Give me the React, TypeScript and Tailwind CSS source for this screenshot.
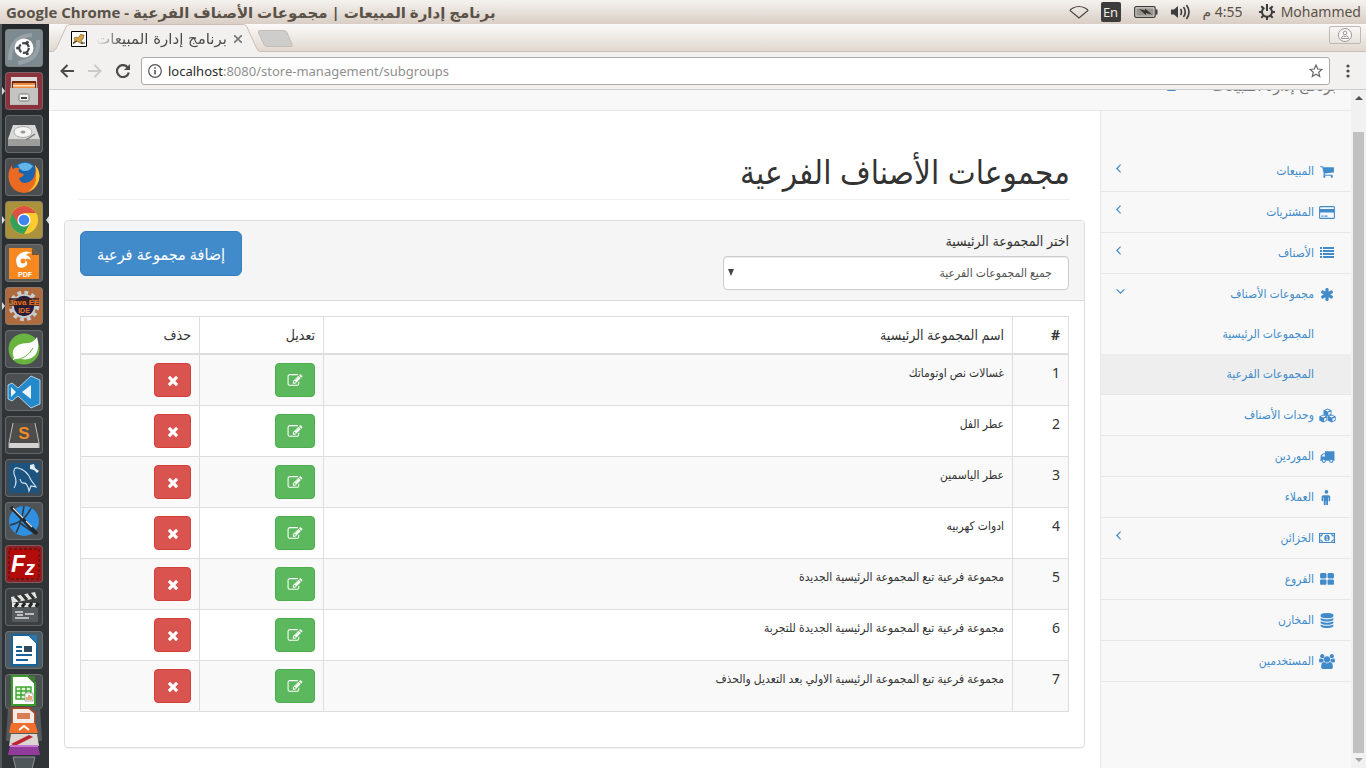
import React, { type ReactNode } from "react";

type IconProps = { className?: string };

const PATHS = {
  cart: "M704 1536q0 52-38 90t-90 38-90-38-38-90 38-90 90-38 90 38 38 90zm896 0q0 52-38 90t-90 38-90-38-38-90 38-90 90-38 90 38 38 90zm128-1088v512q0 24-16.5 42.5t-40.5 21.5l-1044 122q13 60 13 70 0 16-24 64h920q26 0 45 19t19 45-19 45-45 19h-1024q-26 0-45-19t-19-45q0-11 8-31.5t16-36 21.5-40 15.5-29.5l-177-823h-204q-26 0-45-19t-19-45 19-45 45-19h256q16 0 28.5 6.5t19.5 15.5 13 24.5 8 26 5.5 29.5 4.5 26h1201q26 0 45 19t19 45z",
  asterisk: "M1546 1050q46 26 59.5 77.5t-12.5 97.5l-64 110q-26 46-77.5 59.5t-97.5-12.5l-266-153v307q0 52-38 90t-90 38h-128q-52 0-90-38t-38-90v-307l-266 153q-46 26-97.5 12.5t-77.5-59.5l-64-110q-26-46-12.5-97.5t59.5-77.5l266-154-266-154q-46-26-59.5-77.5t12.5-97.5l64-110q26-46 77.5-59.5t97.5 12.5l266 153v-307q0-52 38-90t90-38h128q52 0 90 38t38 90v307l266-153q46-26 97.500-12.500t77.500 59.500l64 110q26 46 12.500 97.500t-59.500 77.500l-266 154z",
  truck: "M640 1408q0-52-38-90t-90-38-90 38-38 90 38 90 90 38 90-38 38-90zm-384-512h384v-256h-158q-13 0-22 9l-195 195q-9 9-9 22v30zm1280 512q0-52-38-90t-90-38-90 38-38 90 38 90 90 38 90-38 38-90zm256-1088v1024q0 15-4 26.5t-13.5 18.5-16.5 11.5-23.5 6-22.5 2-25.5 0-22.5-.5q0 106-75 181t-181 75-181-75-75-181h-384q0 106-75 181t-181 75-181-75-75-181h-64q-3 0-22.5.5t-25.5 0-22.5-2-23.5-6-16.5-11.5-13.5-18.5-4-26.5q0-26 19-45t45-19v-320q0-8-.5-35t0-38 2.5-34.5 6.5-37 14-30.5 22.5-30l198-198q19-19 50.5-32t58.5-13h160v-192q0-26 19-45t45-19h1024q26 0 45 19t19 45z",
  male: "M1280 832v416q0 40-28 68t-68 28-68-28-28-68v-352h-64v912q0 46-33 79t-79 33-79-33-33-79v-464h-64v464q0 46-33 79t-79 33-79-33-33-79v-912h-64v352q0 40-28 68t-68 28-68-28-28-68v-416q0-80 56-136t136-56h640q80 0 136 56t56 136zm-226-612a224 224 0 1 1-448 0 224 224 0 1 1 448 0z",
  large: "M832 1024v384q0 52-38 90t-90 38h-512q-52 0-90-38t-38-90v-384q0-52 38-90t90-38h512q52 0 90 38t38 90zm0-768v384q0 52-38 90t-90 38h-512q-52 0-90-38t-38-90v-384q0-52 38-90t90-38h512q52 0 90 38t38 90zm896 768v384q0 52-38 90t-90 38h-512q-52 0-90-38t-38-90v-384q0-52 38-90t90-38h512q52 0 90 38t38 90zm0-768v384q0 52-38 90t-90 38h-512q-52 0-90-38t-38-90v-384q0-52 38-90t90-38h512q52 0 90 38t38 90z",
  database: "M896 768q237 0 443-43t325-127v170q0 69-103 128t-280 93.5-385 34.5-385-34.5-280-93.5-103-128v-170q119 84 325 127t443 43zm0 768q237 0 443-43t325-127v170q0 69-103 128t-280 93.5-385 34.5-385-34.5-280-93.5-103-128v-170q119 84 325 127t443 43zm0-384q237 0 443-43t325-127v170q0 69-103 128t-280 93.5-385 34.5-385-34.5-280-93.5-103-128v-170q119 84 325 127t443 43zm0-1152q208 0 385 34.5t280 93.5 103 128v128q0 69-103 128t-280 93.5-385 34.5-385-34.5-280-93.5-103-128v-128q0-69 103-128t280-93.5 385-34.5z",
  users: "M529 896q-162 5-265 128h-134q-82 0-138-40.5t-56-118.5q0-353 124-353 6 0 43.5 21t97.5 42.5 119 21.5q67 0 133-23-5 37-5 66 0 139 81 256zm1071 637q0 120-73 189.5t-194 69.5h-874q-121 0-194-69.5t-73-189.5q0-53 3.5-103.5t14-109 26.5-108.5 43-97.5 62-81 85.5-53.5 111.5-20q10 0 43 21.5t73 48 107 48 135 21.5 135-21.5 107-48 73-48 43-21.5q61 0 111.5 20t85.5 53.5 62 81 43 97.5 26.5 108.5 14 109 3.5 103.5zm-1024-1277q0 106-75 181t-181 75-181-75-75-181 75-181 181-75 181 75 75 181zm704 384q0 159-112.5 271.5t-271.5 112.5-271.5-112.5-112.5-271.5 112.5-271.5 271.5-112.5 271.5 112.5 112.5 271.5zm576 225q0 78-56 118.5t-138 40.5h-134q-103-123-265-128 81-117 81-256 0-29-5-66 66 23 133 23 59 0 119-21.5t97.5-42.5 43.5-21q124 0 124 353zm-128-609q0 106-75 181t-181 75-181-75-75-181 75-181 181-75 181 75 75 181z",
  times: "M1490 1322q0 40-28 68l-136 136q-28 28-68 28t-68-28l-294-294-294 294q-28 28-68 28t-68-28l-136-136q-28-28-28-68t28-68l294-294-294-294q-28-28-28-68t28-68l136-136q28-28 68-28t68 28l294 294 294-294q28-28 68-28t68 28l136 136q28 28 28 68t-28 68l-294 294 294 294q28 28 28 68z",
  edit: "M888 1184l116-116-152-152-116 116v56h96v96h56zm440-720q-16-16-33 1l-350 350q-17 17-1 33t33-1l350-350q17-17 1-33zm80 594v190q0 119-84.5 203.5t-203.5 84.5h-832q-119 0-203.5-84.5t-84.5-203.5v-832q0-119 84.5-203.5t203.5-84.5h832q63 0 117 25 15 7 18 23 3 17-9 29l-49 49q-14 14-32 8-23-6-45-6h-832q-66 0-113 47t-47 113v832q0 66 47 113t113 47h832q66 0 113-47t47-113v-126q0-13 9-22l64-64q15-15 35-7t20 29zm-96-738l288 288-672 672h-288v-288zm444 132l-92 92-288-288 92-92q28-28 68-28t68 28l152 152q28 28 28 68t-28 68z",
};

function Glyph({ name, className }: IconProps & { name: keyof typeof PATHS }) {
  return (
    <svg aria-hidden="true" viewBox="-64 0 1920 1792" fill="currentColor" className={className}>
      <path d={PATHS[name]} />
    </svg>
  );
}

function Angle({ dir }: { dir: "left" | "down" }) {
  return dir === "left" ? (
    <svg aria-hidden="true" viewBox="0 0 5 9" className="mb-[6px] h-[9px] w-[5px]" fill="none" stroke="currentColor" strokeWidth="1.200">
      <path d="M4.600.6.800 4.500l3.800 3.900" />
    </svg>
  ) : (
    <svg aria-hidden="true" viewBox="0 0 9 5" className="mb-[6px] h-[5px] w-[9px]" fill="none" stroke="currentColor" strokeWidth="1.200">
      <path d="M.6.400 4.500 4.200 8.400.400" />
    </svg>
  );
}

function Card({ className }: IconProps) {
  return (
    <svg aria-hidden="true" viewBox="0 0 16 13" className={className}>
      <rect x=".6" y=".6" width="14.800" height="11.800" rx="1" fill="none" stroke="currentColor" strokeWidth="1.100" />
      <path d="M1 3h14v3.500H1zM2.500 9.600h2v1.100h-2zM5.500 9.600h3v1.100h-3z" fill="currentColor" />
    </svg>
  );
}

function List({ className }: IconProps) {
  return (
    <svg aria-hidden="true" viewBox="0 0 14 12" className={className} fill="currentColor">
      <path d="M0 0h2v2H0zM3 0h11v2H3zM0 3h2v2H0zM3 3h11v2H3zM0 6h2v2H0zM3 6h11v2H3zM0 9h2v2H0zM3 9h11v2H3z" />
    </svg>
  );
}

function Money({ className }: IconProps) {
  return (
    <svg aria-hidden="true" viewBox="0 0 16 14" className={className} fill="none" stroke="currentColor">
      <path d="M.6 2.500h14.800v9H.6z" strokeWidth="1.200" />
      <path d="M1 5Q3.200 5 3.200 3M15 5Q12.800 5 12.800 3M1 9q2.200 0 2.200 2M15 9q-2.200 0-2.200 2" strokeWidth="1.100" />
      <ellipse cx="8" cy="7" rx="2.700" ry="3.300" fill="currentColor" stroke="none" />
      <path d="M7.200 6l.9-.7V9M7 9h2.200" stroke="#f8f8f8" strokeWidth=".8" />
    </svg>
  );
}

function Cubes({ className }: IconProps) {
  const cube = (x: number, y: number) => (
    <g transform={`translate(${x} ${y})`}>
      <path d="M0 2.200 4 .4l4 1.800v4.200L4 8.400 0 6.400z" fill="currentColor" />
      <path d="M1.600 2.400 4 1.400l2.400 1L4 3.400zM4.700 4.600l2.400-1.100V5.900L4.700 7.100z" fill="#f8f8f8" />
    </g>
  );
  return (
    <svg aria-hidden="true" viewBox="0 0 17 15" className={className}>
      {cube(4.5, 0)}
      {cube(0.3, 6.2)}
      {cube(8.7, 6.2)}
    </svg>
  );
}

type NavItem = { label: string; icon: ReactNode; arrow?: "left" | "down"; children?: { label: string; active?: boolean }[] };

const g = (name: keyof typeof PATHS) => <Glyph name={name} className="h-[15px] w-4" />;

const NAV: NavItem[] = [
  { label: "المبيعات", icon: g("cart"), arrow: "left" },
  { label: "المشتريات", icon: <Card className="h-[13px] w-4" />, arrow: "left" },
  { label: "الأصناف", icon: <List className="h-3 w-[14px]" />, arrow: "left" },
  {
    label: "مجموعات الأصناف",
    icon: g("asterisk"),
    arrow: "down",
    children: [{ label: "المجموعات الرئيسية" }, { label: "المجموعات الفرعية", active: true }],
  },
  { label: "وحدات الأصناف", icon: <Cubes className="h-[15px] w-[17px]" /> },
  { label: "الموردين", icon: g("truck") },
  { label: "العملاء", icon: g("male") },
  { label: "الخزائن", icon: <Money className="h-[14px] w-4" />, arrow: "left" },
  { label: "الفروع", icon: g("large") },
  { label: "المخازن", icon: g("database") },
  { label: "المستخدمين", icon: g("users") },
];

const ROWS = [
  "غسالات نص اوتوماتك",
  "عطر الفل",
  "عطر الياسمين",
  "ادوات كهربيه",
  "مجموعة فرعية تبع المجموعة الرئيسية الجديدة",
  "مجموعة فرعية تبع المجموعة الرئيسية الجديدة للتجربة",
  "مجموعة فرعية تبع المجموعة الرئيسية الاولي بعد التعديل والحذف",
];

/* ---------- desktop ---------- */

function TopPanel() {
  return (
    <header className="flex h-6 shrink-0 items-center justify-between bg-gradient-to-b from-[#f5f2ee] to-[#d9cec5] pr-[5px] pl-[6px] text-[#5a5148]">
      <h1 dir="rtl" className="font-['Open_Sans','DejaVu_Sans',sans-serif] text-[15px] leading-6 font-bold whitespace-nowrap">
        برنامج إدارة المبيعات | مجموعات الأصناف الفرعية - Google Chrome
      </h1>
      <div className="flex items-center font-['Noto_Sans','DejaVu_Sans',sans-serif] text-[14px] leading-6 whitespace-nowrap">
        <svg aria-hidden="true" viewBox="0 0 20 14" className="mr-[12px] h-[14px] w-5" fill="none" stroke="#4c4640" strokeWidth="1.200">
          <path d="M1 5.500Q1 4.500 4 3q6-3 12 0 3 1.500 3 2.500L10 13z" />
        </svg>
        <span className="mr-[13px] flex h-5 w-5 items-center justify-center rounded-[2px] bg-[#3c3c3c] text-[13px] text-[#f0ebe6]">En</span>
        <svg aria-hidden="true" viewBox="0 0 24 12" className="mr-[12px] h-3 w-6">
          <rect x=".7" y=".7" width="20.500" height="10.600" rx="1.500" fill="none" stroke="#3c3c3c" strokeWidth="1.300" />
          <path d="M22 3.500h1.500v5H22z" fill="#3c3c3c" />
          <rect x="2.300" y="2.300" width="17.300" height="7.400" fill="#9a948e" />
          <path d="M5 3l6 1.500V2.500L18 8.500l-6-1.500v2z" fill="#333" />
        </svg>
        <svg aria-hidden="true" viewBox="0 0 21 16" className="mr-[12px] h-4 w-[21px]" fill="none" stroke="#3c3c3c" strokeWidth="1.600">
          <path d="M1 5.500h3L8 2v12L4 10.500H1z" fill="#3c3c3c" stroke="none" />
          <path d="M10.500 5q2 3 0 6M13.500 3q3.500 5 0 10M16.500 1q5 7 0 14" />
        </svg>
        <span dir="rtl" className="mr-4">4:55 م</span>
        <svg aria-hidden="true" viewBox="0 0 16 16" className="mr-[6px] h-4 w-4" fill="none" stroke="#3c3c3c">
          <path d="M5.400 3.600a5 5 0 1 0 5.200 0" strokeWidth="2" />
          <path d="M8 0v7M0 8h3M13 8h3M2.300 13.700l2-2M13.700 13.700l-2-2M8 13v3M2.300 2.300l2 2M13.700 2.300l-2 2" strokeWidth="2" />
        </svg>
        <span>Mohammed</span>
      </div>
    </header>
  );
}

const LAUNCHER: { name: string; tile: string; running?: boolean; focused?: boolean; art: ReactNode }[] = [
  {
    name: "Dash",
    tile: "bg-[#7d8a90]",
    art: (
      <>
        <path d="M4 30Q4 6 26 5M32 10Q34 30 12 33" stroke="#a5b0b5" strokeWidth="4" fill="none" opacity=".6" />
        <circle cx="18" cy="18" r="9.500" fill="#fff" />
        <circle cx="18" cy="18" r="4.800" fill="none" stroke="#3f4648" strokeWidth="2.200" strokeDasharray="8.500 1.550" />
        <circle cx="11.500" cy="18" r="1.500" fill="#3f4648" />
        <circle cx="21.300" cy="12.300" r="1.500" fill="#3f4648" />
        <circle cx="21.300" cy="23.700" r="1.500" fill="#3f4648" />
      </>
    ),
  },
  {
    name: "Files",
    tile: "bg-[#8a323e]",
    running: true,
    art: (
      <>
        <path d="M5 5h26l1 27H4z" fill="#b9b9b7" />
        <path d="M5 4h26v5H5z" fill="#dedddb" />
        <path d="M6 8h24v7H6z" fill="#6b2b15" />
        <path d="M7 10h22v5H7z" fill="#ef8a3c" />
        <path d="M7 12h22v1.500H7z" fill="#fbe5c8" />
        <path d="M4 15h28v16H4z" fill="#c4c4c2" />
        <rect x="13" y="21" width="10" height="7" rx="1.500" fill="#f5f5f5" stroke="#777" />
        <path d="M15 24h6v2h-6z" fill="#444" />
      </>
    ),
  },
  {
    name: "Disks",
    tile: "bg-[#45494b]",
    art: (
      <>
        <path d="M7 9h22l5 14v7H2v-7z" fill="#d9d9d7" />
        <path d="M2 23h32v7H2z" fill="#9d9d9b" />
        <ellipse cx="17" cy="16" rx="9" ry="5.500" fill="#f5f5f4" stroke="#aaa" />
        <ellipse cx="17" cy="16" rx="2.500" ry="1.500" fill="#999" />
        <path d="M29 18l-9 6" stroke="#777" strokeWidth="1.500" />
      </>
    ),
  },
  {
    name: "Firefox",
    tile: "bg-[#4b4f51]",
    art: (
      <>
        <circle cx="19" cy="17" r="14" fill="#1b65ae" />
        <path d="M12 6q8-5 15 1-3 5-8 5t-7-6" fill="#63b5e5" />
        <path d="M29 6q6 7 4 15-3 12-15 13Q6 33 3 22 1 13 6 6q0 3 1 4 3-2 7-1-3 3 0 5l4 1q-1 3-5 4 1 5 6 5 9-1 10-10 1-4 0-8" fill="#ea6a22" />
        <path d="M29 6q6 7 4 15-3 9-11 12 9-7 8-16 1-5-1-11" fill="#fbc62e" />
      </>
    ),
  },
  {
    name: "Chrome",
    tile: "bg-[#aa913c]",
    running: true,
    focused: true,
    art: (
      <>
        <circle cx="18" cy="18" r="14" fill="#fccb2f" />
        <path d="M5.900 11A14 14 0 0 0 18 32l6-10.500-6-3.500z" fill="#35a05a" />
        <path d="M5.900 11A14 14 0 0 1 30.100 11H18v7l-6 3.500z" fill="#dd5144" />
        <circle cx="18" cy="18" r="6.600" fill="#fff" />
        <circle cx="18" cy="18" r="5.300" fill="#3f86f0" />
      </>
    ),
  },
  {
    name: "PDF reader",
    tile: "bg-[#5c5a57]",
    art: (
      <>
        <path d="M3 3h23l7 7v24H3z" fill="#f6881f" />
        <path d="M26 3v7h7z" fill="#6d5a45" />
        <path d="M12 22q-5-9 3-14 5-3 11 0-5 0-6 2 4 1 5 5-5-3-6 0 3 1 2 5-3 4-9 2" fill="#fff" />
        <circle cx="17" cy="16" r="2.500" fill="#f6881f" />
        <text x="19" y="32" textAnchor="middle" fontSize="7" fontWeight="700" fill="#fff">PDF</text>
      </>
    ),
  },
  {
    name: "Eclipse",
    tile: "bg-[#ad6b3e]",
    running: true,
    art: (
      <>
        <circle cx="18" cy="18" r="13.500" fill="none" stroke="#c9ccd0" strokeWidth="3.500" strokeDasharray="3.800 3.270" />
        <circle cx="18" cy="18" r="12" fill="#c9ccd0" />
        <circle cx="18" cy="18" r="10.200" fill="#241c3c" />
        <path d="M3 10h30v8H3z" fill="#3a1f1c" opacity=".75" />
        <text x="18" y="17" textAnchor="middle" fontSize="8" fontWeight="700" fill="#e8761e">Java EE</text>
        <text x="18" y="25" textAnchor="middle" fontSize="7" fontWeight="700" fill="#e8761e">IDE</text>
      </>
    ),
  },
  {
    name: "Spring",
    tile: "bg-[#4b4f51]",
    art: (
      <>
        <circle cx="18" cy="18" r="15.500" fill="#69b33f" />
        <path d="M31 6q3 10-1 17-5 7-15 5-4 0-8 1 0-2 1-2-4-8 4-13 4-2 11-2 5-1 8-6" fill="#fff" />
        <path d="M8 29q13-1 19-12" stroke="#69b33f" strokeWidth="1" fill="none" />
      </>
    ),
  },
  {
    name: "VS Code",
    tile: "bg-[#4b4f51]",
    art: (
      <>
        <path d="M25 2 34 6v24l-9 4-13-12-6 5-4-2V11l4-2 6 5z" fill="#2489ca" stroke="#d5e9f6" strokeWidth=".8" />
        <path d="M25 11l-9 7 9 7zM5 13v10l5-5z" fill="#eef5fa" />
      </>
    ),
  },
  {
    name: "Sublime Text",
    tile: "bg-[#3f4243]",
    art: (
      <>
        <path d="M7 6h22l4 20v5H3v-5z" fill="#4d4d4b" />
        <path d="M3 26h30v5H3z" fill="#d3d3d1" />
        <path d="M7 6 3 26v5M29 6l4 20v5" stroke="#bbb" fill="none" />
        <text x="18" y="22" textAnchor="middle" fontSize="17" fontWeight="700" fill="#f28a27">S</text>
      </>
    ),
  },
  {
    name: "MySQL Workbench",
    tile: "bg-[#3f4a52]",
    art: (
      <>
        <rect x="3" y="3" width="30" height="30" rx="2" fill="#1d537f" />
        <path d="M8 28Q12 22 8 14q-1-7 4-6 9 2 13 12l5 7-5-1-2 5q-1-6-4-8-4 1-5-4" stroke="#dbe7f0" strokeWidth="1.100" fill="none" />
        <path d="M24 5v4l4 1 3 3 2-2-4-3-1-4z" fill="#e8edf0" />
      </>
    ),
  },
  {
    name: "Text editor",
    tile: "bg-[#4f5355]",
    art: (
      <>
        <circle cx="18" cy="18" r="15" fill="#2f8fe0" />
        <path d="M4 22Q18 20 25 5M18 3q-2 15-8 27M14 20l14 10" stroke="#2f3a44" strokeWidth="1.600" fill="none" />
        <path d="M5 4 31 31" stroke="#20262b" strokeWidth="3.600" />
        <path d="M7 5 17 15M20 18l6 6" stroke="#d9dde0" strokeWidth="1.400" />
      </>
    ),
  },
  {
    name: "FileZilla",
    tile: "bg-[#8c2023]",
    art: (
      <>
        <rect x="3" y="3" width="30" height="30" fill="#b30a0a" stroke="#6f0d0d" strokeWidth="1.500" strokeDasharray="3 2" />
        <text x="5" y="26" fontSize="23" fontWeight="700" fontStyle="italic" fill="#fff">
          F<tspan dy="3" fontSize="20">z</tspan>
        </text>
      </>
    ),
  },
  {
    name: "Video editor",
    tile: "bg-[#3c4042]",
    art: (
      <>
        <path d="M5 8 29 3l2 6-25 5z" fill="#e3e3e1" />
        <path d="M9 7l5 5M16 5l5 6M23 4l5 6" stroke="#333" strokeWidth="3" />
        <rect x="6" y="14" width="26" height="19" rx="1" fill="#555a5c" />
        <path d="M6 14h26v4H6z" fill="#e3e3e1" />
        <path d="M9 18l3-4M16 18l3-4M23 18l3-4M30 18l2-4" stroke="#222" strokeWidth="3" />
        <path d="M9 23h8M11 26h6M19 25h9M9 29h14" stroke="#ddd" strokeWidth="1.500" />
      </>
    ),
  },
  {
    name: "Writer",
    tile: "bg-[#4c5c66]",
    art: (
      <>
        <path d="M6 3h17l8 8v22H6z" fill="#fff" stroke="#156398" strokeWidth="2" />
        <path d="M23 3h8v8z" fill="#2b79b0" />
        <path d="M10 15h6M10 19h6M10 23h16M10 28h12" stroke="#156398" strokeWidth="1.800" />
        <rect x="18" y="14" width="8" height="6" fill="#2f4a5e" />
      </>
    ),
  },
];

function Launcher() {
  return (
    <nav aria-label="Launcher" className="flex w-[49px] shrink-0 flex-col overflow-hidden border-l-2 border-[#50585b] bg-gradient-to-b from-[#25292b] via-[#303436] to-[#303436] pt-[5px] font-['Liberation_Sans',sans-serif]">
      {LAUNCHER.map((a) => (
        <div key={a.name} className="flex h-[43px] shrink-0 items-start">
          <span className="flex h-[38px] w-[3px] items-center">
            {a.running && <svg aria-hidden="true" viewBox="0 0 3 8" className="h-2 w-[3px]"><path d="M0 0l3 4-3 4z" fill="#ddd" /></svg>}
          </span>
          <button type="button" aria-label={a.name} className={`flex h-[38px] w-[38px] items-center justify-center rounded-[4px] border border-[#7b8184]/60 ${a.tile}`}>
            <svg aria-hidden="true" viewBox="0 0 36 36" className="h-9 w-9">{a.art}</svg>
          </button>
          <span className="flex h-[38px] flex-1 items-center justify-end">
            {a.focused && <svg aria-hidden="true" viewBox="0 0 3 8" className="h-2 w-[3px]"><path d="M3 0L0 4l3 4z" fill="#ddd" /></svg>}
          </span>
        </div>
      ))}
      <svg aria-hidden="true" viewBox="0 0 38 100" className="mx-[3px] h-[100px] w-[38px] shrink-0">
        <rect x=".5" y=".5" width="37" height="34" rx="3" fill="#4a504f" stroke="#6d7375" />
        <path d="M7 2h16l7 7v22H7z" fill="#fff" stroke="#3a9a2b" strokeWidth="2" />
        <path d="M22 2h8v8z" fill="#3f7f35" />
        <path d="M11 13h15v12H11zM11 17h15M11 21h15M16 13v12M21 13v12" fill="#dff3d6" stroke="#3fa52f" strokeWidth="1.400" />
        <path d="M20 19h8v8h-8z" fill="#fff" stroke="#888" strokeWidth=".7" />
        <path d="M22 26v-3M24 26v-5M26 26v-4" stroke="#d9772c" strokeWidth="1.300" />
        <path d="M3 33h32l2 34H1z" fill="#55595b" />
        <path d="M7 34h17l6 5v11H7z" fill="#f4ece6" stroke="#a1472a" strokeWidth="1.800" />
        <path d="M12 39h13v6H12z" fill="#d87d55" />
        <path d="M6 49h24l3 10H4z" fill="#ef6f2b" />
        <path d="M14 56l5-4 5 4" fill="none" stroke="#fff" strokeWidth="2" />
        <path d="M6 60h26l2 12H4z" fill="#dad6d2" />
        <path d="M6 70 24 61l4 2-18 9z" fill="#bd2631" />
        <path d="M5 71h28l2 10H3z" fill="#913b9b" />
        <path d="M5 71h28v2H5z" fill="#c676ce" />
        <path d="M8 83h22l-3 12H11z" fill="#50575a" stroke="#8b9295" />
      </svg>
    </nav>
  );
}

/* ---------- browser ---------- */

function TabStrip() {
  return (
    <div className="flex h-7 shrink-0 justify-between border-b border-[#cdbfb5] bg-gradient-to-b from-[#fbfaf9] to-[#e1d8d0]">
      <div className="flex">
        <div className="relative h-7 w-[212px]">
          <svg aria-hidden="true" viewBox="0 0 212 28" className="absolute inset-0 h-7 w-[212px]">
            <path d="M0 28.500Q6 28 8 23L17 3Q18 .5 21 .5H194Q197 .5 198 3L207 23Q209 28 212 28.500z" fill="#f2f1f0" stroke="#cdbfb5" />
          </svg>
          <div className="relative flex h-7 items-center pt-[2px] pl-[22px]">
            <svg aria-hidden="true" viewBox="0 0 16 16" className="h-4 w-4 shrink-0">
              <path d="M.5.5h15v15H.5z" fill="#fff" stroke="#000" />
              <path d="M3 7 5 6l2 1 3-4 1 1 2 0-1 4-2 1 2 4-3-1-3-2-4 3 2-4z" fill="#d9a441" stroke="#6b4d16" strokeWidth=".6" />
              <path d="M2 12l4-2M10 12h4" stroke="#333" />
            </svg>
            <span dir="rtl" className="mr-[7px] ml-2 w-[132px] overflow-hidden [mask-image:linear-gradient(to_right,transparent,black_28px)] font-['DejaVu_Sans',sans-serif] text-[15px] leading-5 whitespace-nowrap text-[#4c4c4c]">
              برنامج إدارة المبيعات
            </span>
            <button type="button" aria-label="Close tab" className="text-[#777]">
              <svg aria-hidden="true" viewBox="0 0 8 8" className="h-2 w-2"><path d="M0 0l8 8M8 0L0 8" stroke="currentColor" strokeWidth="1.600" /></svg>
            </button>
          </div>
        </div>
        <button type="button" aria-label="New tab" className="mt-[6px] -ml-1 h-[18px] w-[36px]">
          <svg aria-hidden="true" viewBox="0 0 36 18" className="h-[18px] w-9"><path d="M3 .5h24q2 0 3 2l5 12q1 2-1 2H10q-2 0-3-2L1.500 3Q.5.500 3 .5z" fill="#cfcdcb" stroke="#c3bdb8" /></svg>
        </button>
      </div>
      <button type="button" aria-label="Profile" className="mt-[2px] mr-[5px] flex h-[18px] w-8 items-center justify-center rounded-[2px] border border-[#c0b9b3]">
        <svg aria-hidden="true" viewBox="0 0 16 16" className="h-4 w-4" fill="#fbfaf9" stroke="#9c9793">
          <circle cx="8" cy="8" r="6.500" />
          <circle cx="8" cy="6" r="1.800" />
          <path d="M4.500 11.500q0-2.500 2-2.500 1.500 1 3 0 2 0 2 2.500z" />
        </svg>
      </button>
    </div>
  );
}

function Toolbar() {
  return (
    <div className="flex h-[38px] shrink-0 items-center border-b border-[#cfcdcb] bg-[#f2f1f0] pr-4 pl-[11px]">
      <button type="button" aria-label="Back" className="mr-[14px]">
        <svg aria-hidden="true" viewBox="0 0 14 14" className="h-[14px] w-[14px]" fill="none" stroke="#4a4a4a" strokeWidth="2"><path d="M14 7H1.500M7.500 1l-6 6 6 6" /></svg>
      </button>
      <button type="button" aria-label="Forward" className="mr-[14px]" disabled>
        <svg aria-hidden="true" viewBox="0 0 14 14" className="h-[14px] w-[14px]" fill="none" stroke="#cbcac9" strokeWidth="2"><path d="M0 7h12.500M6.500 1l6 6-6 6" /></svg>
      </button>
      <button type="button" aria-label="Reload" className="mr-[11px]">
        <svg aria-hidden="true" viewBox="0 0 14 14" className="h-[14px] w-[14px]" fill="none"><path d="M11.600 3.200A6 6 0 1 0 12.800 8.500" stroke="#4a4a4a" strokeWidth="2.200" /><path d="M14 0v6H8z" fill="#4a4a4a" /></svg>
      </button>
      <div className="flex h-7 min-w-0 flex-1 items-center rounded-[3px] border border-[#adabaa] bg-white pr-[6px] pl-[6px]">
        <svg aria-hidden="true" viewBox="0 0 14 14" className="mr-[6px] h-[14px] w-[14px] shrink-0" fill="none" stroke="#555">
          <circle cx="7" cy="7" r="6.300" strokeWidth="1.200" />
          <path d="M7 6v4.500M7 3.200v1.600" strokeWidth="1.600" />
        </svg>
        <a href="#subgroups" className="min-w-0 flex-1 truncate font-['Noto_Sans',sans-serif] text-[13px] leading-5 text-[#8f8f8f]">
          <span className="text-[#2b2b2b]">localhost</span>:8080/store-management/subgroups
        </a>
        <button type="button" aria-label="Bookmark">
          <svg aria-hidden="true" viewBox="0 0 14 14" className="h-[14px] w-[14px]" fill="none" stroke="#666" strokeWidth="1.200"><path d="M7 1l1.700 4 4.300.4-3.300 2.800 1 4.200L7 10.200l-3.700 2.200 1-4.200L1 5.400 5.300 5z" /></svg>
        </button>
      </div>
      <button type="button" aria-label="Menu" className="ml-4">
        <svg aria-hidden="true" viewBox="0 0 4 14" className="h-[14px] w-1" fill="#4a4a4a"><circle cx="2" cy="2" r="1.600" /><circle cx="2" cy="7" r="1.600" /><circle cx="2" cy="12" r="1.600" /></svg>
      </button>
    </div>
  );
}

function Scrollbar() {
  return (
    <div aria-hidden="true" className="flex w-[15px] shrink-0 flex-col items-center bg-[#f1f1f1] py-[6px]">
      <svg viewBox="0 0 8 4" className="h-1 w-2"><path d="M4 0l4 4H0z" fill="#505050" /></svg>
      <div className="mt-8 mb-[5px] w-[11px] flex-1 bg-[#c1c1c1]" />
      <svg viewBox="0 0 8 4" className="h-1 w-2"><path d="M4 4l4-4H0z" fill="#a3a3a3" /></svg>
    </div>
  );
}

/* ---------- page ---------- */

function Sidebar() {
  return (
    <nav aria-label="القائمة" className="w-[251px] shrink-0 border-l border-[#e7e7e7] bg-[#f8f8f8] pt-10 text-[12px] text-[#428bca]">
      <ul>
        {NAV.map((item) => (
          <li key={item.label} className="border-b border-[#e7e7e7]">
            <a href="#menu" className="flex h-10 items-center pr-[15px] pl-[15px] leading-5">
              <span className="ml-1 flex w-[18px] justify-center">{item.icon}</span>
              <span className="flex-1">{item.label}</span>
              {item.arrow && <Angle dir={item.arrow} />}
            </a>
            {item.children && (
              <ul>
                {item.children.map((c) => (
                  <li key={c.label}>
                    <a href="#subgroups" className={`flex h-10 items-center pr-[37px] leading-5 ${c.active ? "bg-[#eeeeee]" : ""}`}>{c.label}</a>
                  </li>
                ))}
              </ul>
            )}
          </li>
        ))}
      </ul>
    </nav>
  );
}

function SubgroupsTable() {
  const cell = "border border-[#dddddd] p-2 text-right align-top";
  return (
    <table className="w-full table-fixed border-collapse">
      <colgroup>
        <col className="w-14" />
        <col />
        <col className="w-[124px]" />
        <col className="w-[119px]" />
      </colgroup>
      <thead>
        <tr>
          {["#", "اسم المجموعة الرئيسية", "تعديل", "حذف"].map((h) => (
            <th key={h} scope="col" className={`border border-b-2 border-[#dddddd] p-2 text-right leading-5 ${h === "#" ? "font-bold" : "font-normal"}`}>{h}</th>
          ))}
        </tr>
      </thead>
      <tbody>
        {ROWS.map((name, i) => (
          <tr key={name} className="odd:bg-[#f9f9f9]">
            <td className={cell}>{i + 1}</td>
            <td className={`${cell} text-[12px] leading-5`}>{name}</td>
            <td className={cell}>
              <button type="button" aria-label="تعديل" className="flex h-[34px] w-10 items-center justify-center rounded-[4px] border border-[#4cae4c] bg-[#5cb85c] text-white">
                <Glyph name="edit" className="h-[15px] w-4" />
              </button>
            </td>
            <td className={cell}>
              <button type="button" aria-label="حذف" className="flex h-[34px] w-[37px] items-center justify-center rounded-[4px] border border-[#d43f3a] bg-[#d9534f] text-white">
                <Glyph name="times" className="h-[15px] w-4" />
              </button>
            </td>
          </tr>
        ))}
      </tbody>
    </table>
  );
}

function Page() {
  return (
    <div dir="rtl" className="flex min-w-0 flex-1 flex-col overflow-hidden bg-white font-['Noto_Sans','DejaVu_Sans_Condensed','DejaVu_Sans',sans-serif] text-[14px] leading-5 text-[#333333]">
      <header className="flex h-[21px] shrink-0 items-end overflow-hidden border-b border-[#e7e7e7] bg-[#f8f8f8] pr-[15px]">
        <div className="flex h-[50px] shrink-0 items-center gap-[34px]">
          <a href="#home" className="text-[16px] text-[#777777]">برنامج إدارة المبيعات</a>
          <span className="h-3 w-[11px] rounded-b-[3px] bg-[#428bca]" />
        </div>
      </header>
      <div className="flex min-h-0 flex-1">
        <Sidebar />
        <main className="min-w-0 flex-1 px-[15px]">
          <h2 className="mx-[15px] mt-10 mb-5 border-b border-[#eeeeee] pb-[6px] text-[33px] leading-[42px] font-normal">مجموعات الأصناف الفرعية</h2>
          <section className="rounded-[4px] border border-[#dddddd] shadow-[0_1px_1px_rgba(0,0,0,0.05)]">
            <div className="flex items-start justify-between rounded-t-[3px] border-b border-[#dddddd] bg-[#f5f5f5] px-[15px] py-[10px]">
              <div className="w-[35%]">
                <label htmlFor="group" className="mb-[5px] block">اختر المجموعة الرئيسية</label>
                <div className="relative">
                  <select id="group" className="block h-[34px] w-full appearance-none rounded-[4px] border border-[#cccccc] bg-white pr-4 pl-5 text-[12px] text-[#555555] shadow-[inset_0_1px_1px_rgba(0,0,0,0.075)]">
                    <option>جميع المجموعات الفرعية</option>
                  </select>
                  <svg aria-hidden="true" viewBox="0 0 6 7" className="pointer-events-none absolute top-[13px] left-[5px] h-[7px] w-[6px]"><path d="M0 0h6L3 7z" fill="#444" /></svg>
                </div>
              </div>
              <button type="button" className="h-[45px] rounded-[6px] border border-[#357ebd] bg-[#428bca] px-4 text-[16px] leading-6 text-white">إضافة مجموعة فرعية</button>
            </div>
            <div className="p-[15px] pb-[35px]">
              <SubgroupsTable />
            </div>
          </section>
        </main>
      </div>
    </div>
  );
}

export default function App() {
  return (
    <div className="flex h-screen flex-col overflow-hidden">
      <TopPanel />
      <div className="flex min-h-0 flex-1">
        <Launcher />
        <div className="flex min-w-0 flex-1 flex-col">
          <TabStrip />
          <Toolbar />
          <div className="flex min-h-0 flex-1">
            <Page />
            <Scrollbar />
          </div>
        </div>
      </div>
    </div>
  );
}
